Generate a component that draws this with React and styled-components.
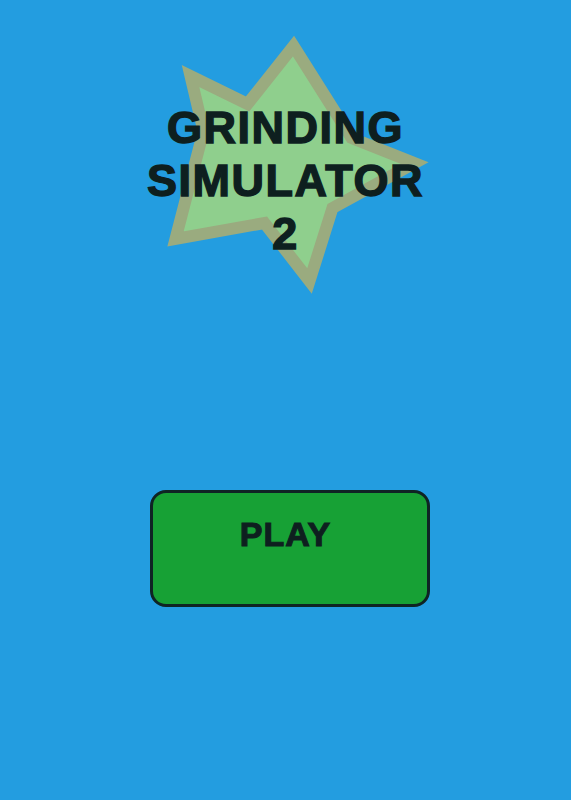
import React from 'react';
import styled, { createGlobalStyle } from 'styled-components';

const GlobalStyle = createGlobalStyle`
body {
  margin: 0;
  background-color: #239de0;
  font-family: "Liberation Sans", Arial, sans-serif;
}
`

const Screen = styled.div`
min-height: 100vh;
display: flex;
flex-direction: column;
align-items: center;
`

const Hero = styled.header`
position: relative;
width: 100%;
padding-top: 101px;
display: flex;
justify-content: center;
`

const Burst = styled.svg`
position: absolute;
top: 0;
left: 50%;
transform: translateX(-50%);
width: 571px;
height: 320px;
`

const Title = styled.h1`
position: relative;
margin: 0;
font-size: 45px;
line-height: 53px;
font-weight: 700;
letter-spacing: 1.5px;
text-align: center;
color: #0e1f1f;
-webkit-text-stroke: 1.4px #0e1f1f;
`

const PlayButton = styled.button`
margin-top: 230px;
margin-left: 8px;
width: 280px;
height: 117px;
padding: 24px 8px 0 0;
display: flex;
justify-content: center;
align-items: flex-start;
background-color: #17a135;
border: 3px solid #0f2424;
border-radius: 16px;
font-family: inherit;
font-size: 34px;
line-height: 34px;
font-weight: 700;
letter-spacing: 1px;
color: #0e1f1f;
-webkit-text-stroke: 1.1px #0e1f1f;
cursor: pointer;
`

// star outline along the middle of its rim, page coordinates
const starPoints = '293,46 351,138 414,163 332,208 309,281 264,223 175,239 203,131 190,76 247,104';

const App = () => {

    return (
        <Screen>
            <GlobalStyle />
            <Hero>
                <Burst viewBox="0 0 571 320">
                    <polygon points={starPoints} fill="#8fcf8d" stroke="#9aab7f" strokeWidth="12" strokeLinejoin="miter" strokeMiterlimit="6" />
                </Burst>
                <Title>GRINDING<br />SIMULATOR<br />2</Title>
            </Hero>
            <PlayButton type="button">PLAY</PlayButton>
        </Screen>
    );

};

export default App;
